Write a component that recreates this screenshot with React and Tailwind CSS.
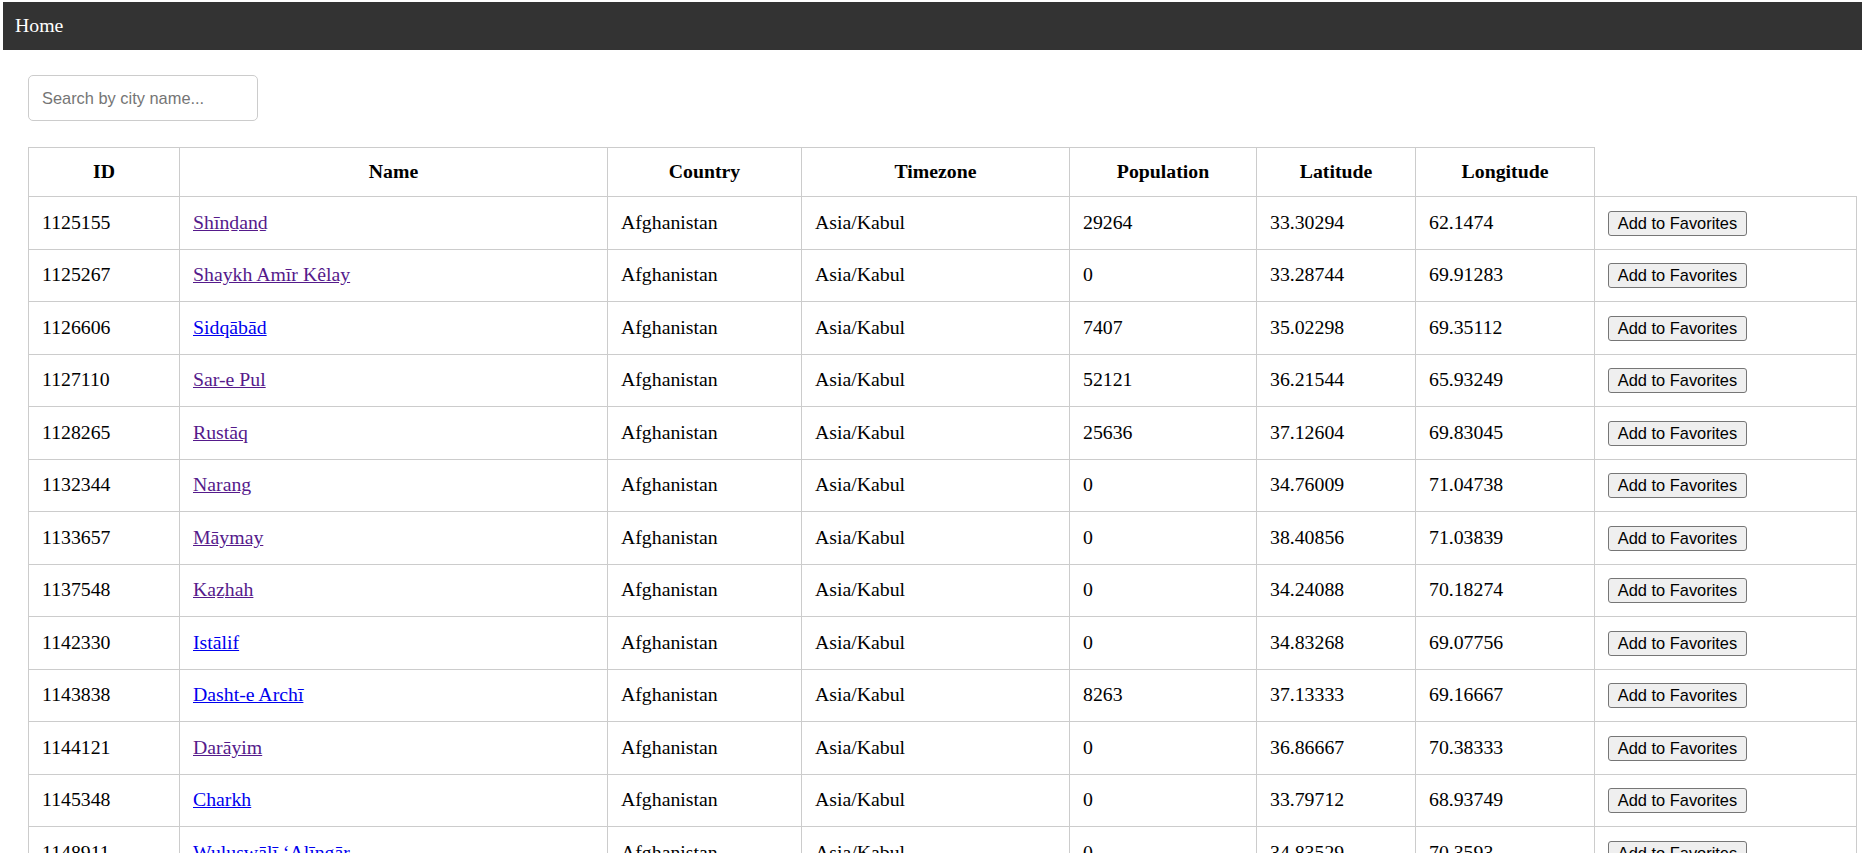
import React from "react";

const rows = [
  ["1125155", "Shīnḏanḏ", "29264", "33.30294", "62.1474", true],
  ["1125267", "Shaykh Amīr Kêlay", "0", "33.28744", "69.91283", true],
  ["1126606", "Sidqābād", "7407", "35.02298", "69.35112", false],
  ["1127110", "Sar-e Pul", "52121", "36.21544", "65.93249", true],
  ["1128265", "Rustāq", "25636", "37.12604", "69.83045", true],
  ["1132344", "Narang", "0", "34.76009", "71.04738", true],
  ["1133657", "Māymay", "0", "38.40856", "71.03839", true],
  ["1137548", "Kaẕhah", "0", "34.24088", "70.18274", true],
  ["1142330", "Istālif", "0", "34.83268", "69.07756", false],
  ["1143838", "Dasht-e Archī", "8263", "37.13333", "69.16667", false],
  ["1144121", "Darāyim", "0", "36.86667", "70.38333", true],
  ["1145348", "Charkh", "0", "33.79712", "68.93749", false],
  ["1148911", "Wuluswālī ‘Alīngār", "0", "34.83529", "70.3593", false],
  ["1160066", "Wāshēr", "0", "32.25046", "63.85645", false],
  ["1162862", "Yaḩyá Khēl", "0", "32.93667", "68.64333", false],
];

const headers = ["ID", "Name", "Country", "Timezone", "Population", "Latitude", "Longitude"];

export default function App() {
  return (
    <div className="min-h-screen bg-white pt-[2px] pl-[3px] font-['Liberation_Serif',serif] text-black">
      <nav className="h-[48px] bg-[#333333] flex items-center px-[12px] text-white text-[19.8px]">
        Home
      </nav>
      <div className="pl-[25px] pt-[25px]">
        <input
          type="text"
          placeholder="Search by city name..."
          className="w-[230px] h-[46px] border border-[#cccccc] rounded-[5px] px-[13px] font-['Liberation_Sans',Arial,sans-serif] text-[16.4px] text-black placeholder:text-[#757575] outline-none"
        />
      </div>
      <div className="pl-[25px] pt-[26px]">
        <table className="table-fixed w-[1828px] border-collapse text-[19.8px]">
          <colgroup>
            <col className="w-[151px]" />
            <col className="w-[428px]" />
            <col className="w-[194px]" />
            <col className="w-[268px]" />
            <col className="w-[187px]" />
            <col className="w-[159px]" />
            <col className="w-[179px]" />
            <col className="w-[262px]" />
          </colgroup>
          <thead>
            <tr>
              {headers.map((h) => (
                <th
                  key={h}
                  className="h-[49px] border border-[#cccccc] px-[13px] py-0 font-bold text-center align-middle"
                >
                  {h}
                </th>
              ))}
            </tr>
          </thead>
          <tbody>
            {rows.map(([id, name, pop, lat, lon, visited]) => (
              <tr key={id}>
                <td className="h-[52.5px] border border-[#cccccc] px-[13px] py-0 align-middle">{id}</td>
                <td className="border border-[#cccccc] px-[13px] py-0 align-middle">
                  <a
                    href="#"
                    className={visited ? "underline text-[#551a8b]" : "underline text-[#0000ee]"}
                  >
                    {name}
                  </a>
                </td>
                <td className="border border-[#cccccc] px-[13px] py-0 align-middle">Afghanistan</td>
                <td className="border border-[#cccccc] px-[13px] py-0 align-middle">Asia/Kabul</td>
                <td className="border border-[#cccccc] px-[13px] py-0 align-middle">{pop}</td>
                <td className="border border-[#cccccc] px-[13px] py-0 align-middle">{lat}</td>
                <td className="border border-[#cccccc] px-[13px] py-0 align-middle">{lon}</td>
                <td className="border border-[#cccccc] px-[13px] py-0 align-middle">
                  <button className="w-[139px] h-[25px] px-0 text-center bg-[#efefef] border border-[#767676] rounded-[3px] font-['Liberation_Sans',Arial,sans-serif] text-[16.4px] leading-none text-black">
                    Add to Favorites
                  </button>
                </td>
              </tr>
            ))}
          </tbody>
        </table>
      </div>
    </div>
  );
}
